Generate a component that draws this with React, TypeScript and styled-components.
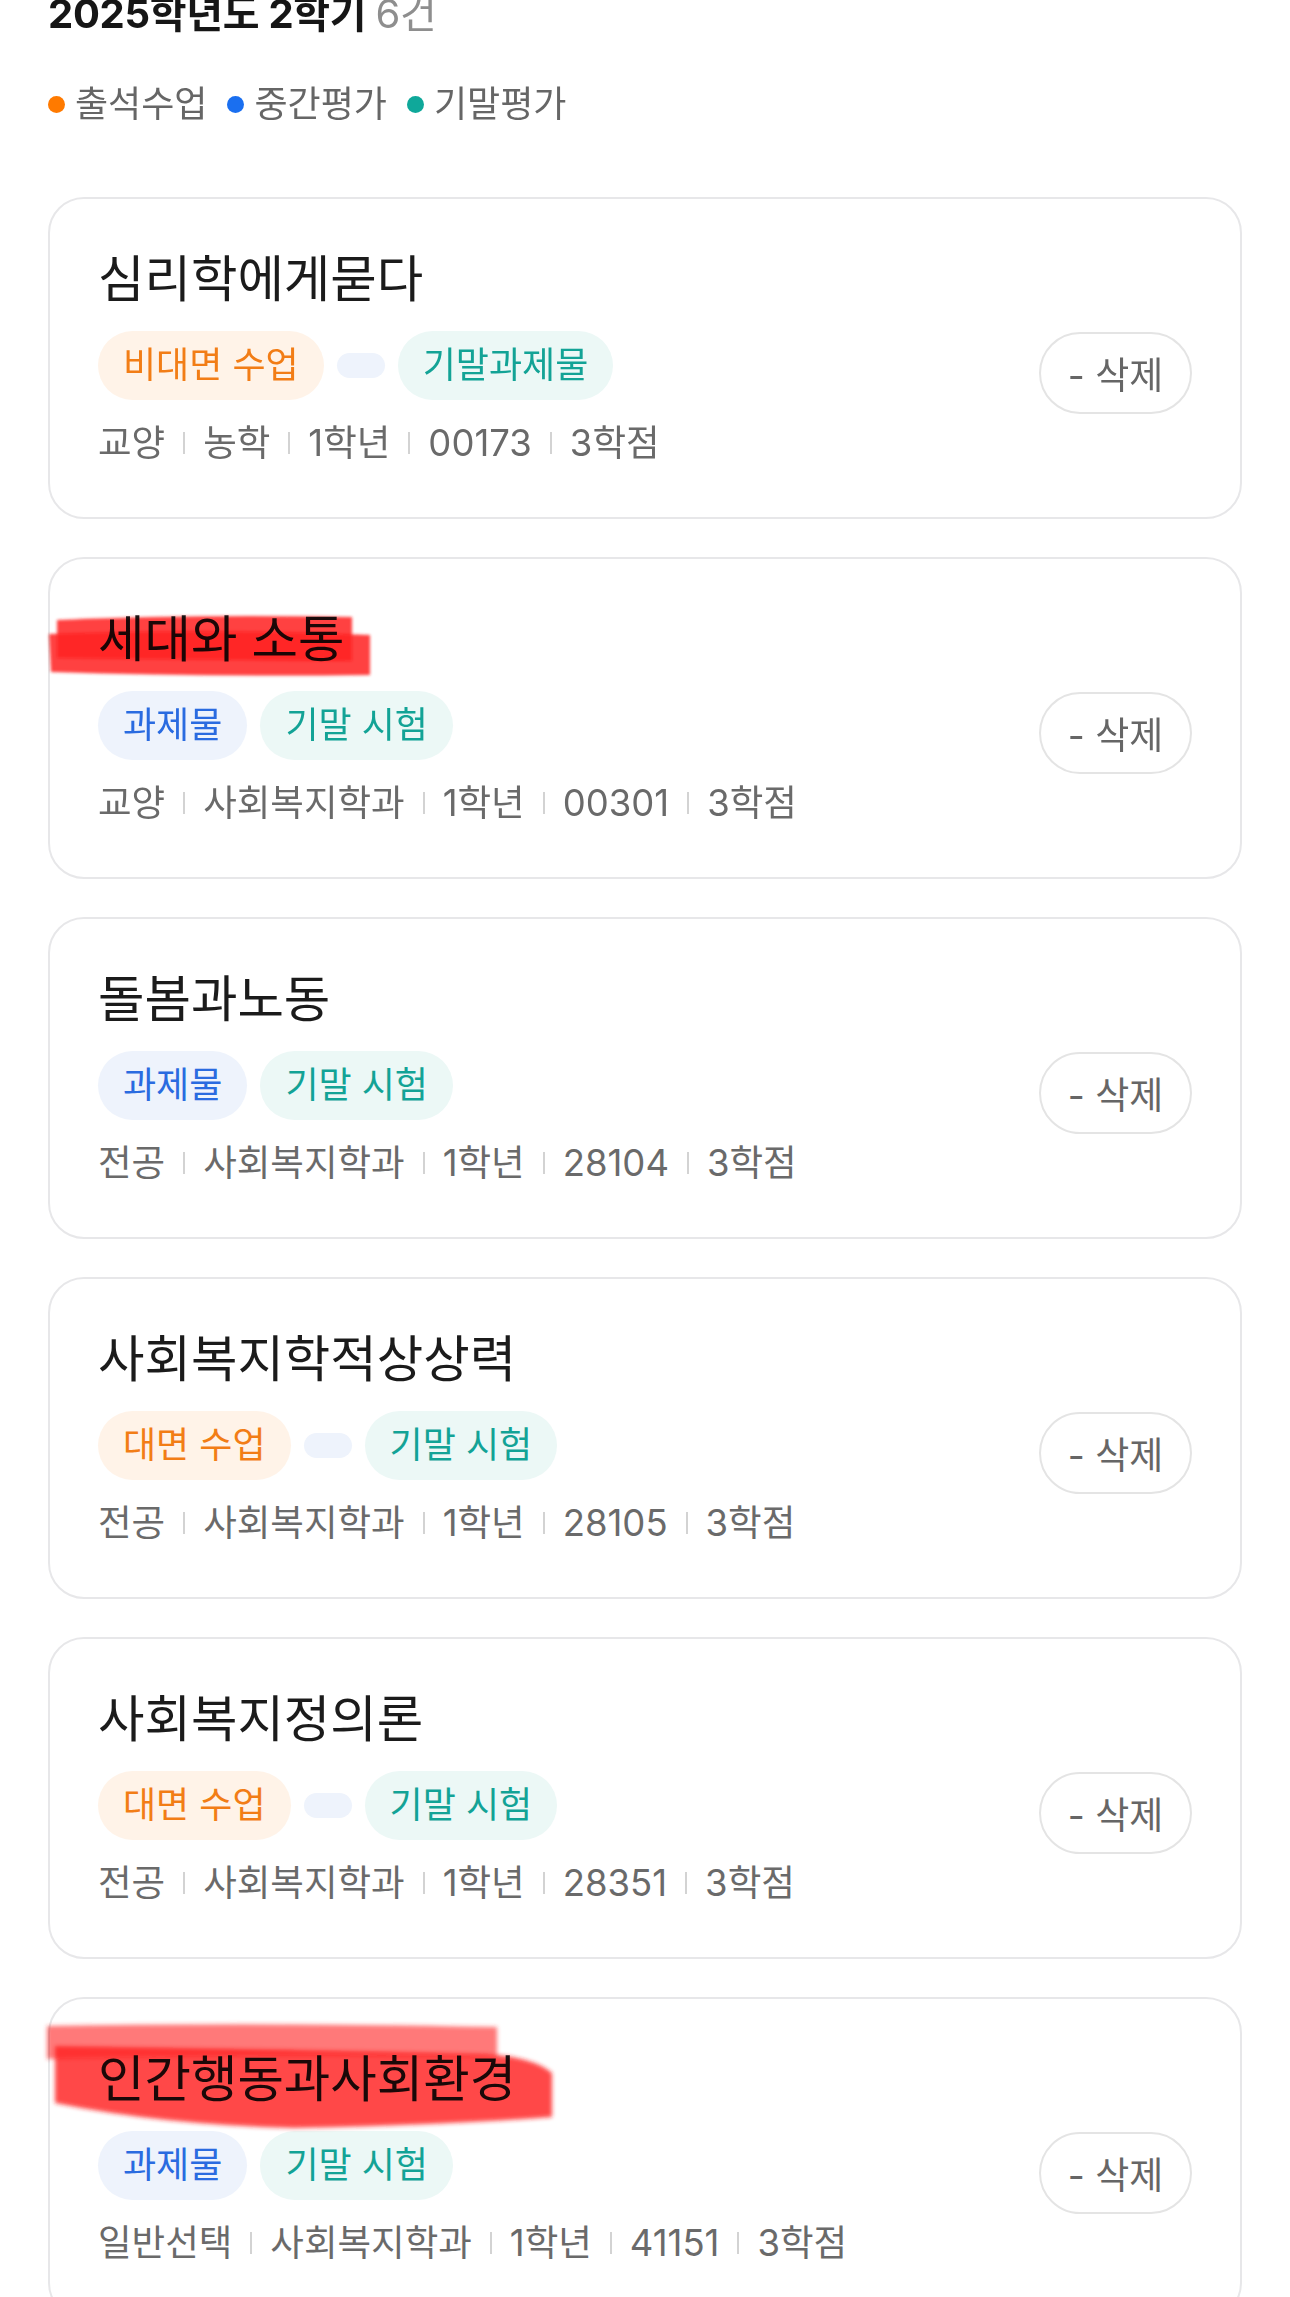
import React from "react";
import styled, { createGlobalStyle, css } from "styled-components";

const GlobalStyle = createGlobalStyle`
  html, body {
    margin: 0;
    padding: 0;
    background: #ffffff;
  }
  body {
    font-family: Inter, "Noto Sans CJK KR", "Noto Sans", sans-serif;
    color: #1d1d1d;
    overflow: hidden;
    -webkit-font-smoothing: antialiased;
  }
`;

type Tone = "orange" | "blue" | "teal";

const toneColors: Record<Tone, { fg: string; bg: string; dot: string }> = {
  orange: { fg: "#f27d16", bg: "#fff3e8", dot: "#ff7a00" },
  blue: { fg: "#2a6be0", bg: "#eef3fc", dot: "#1a6ff0" },
  teal: { fg: "#13a396", bg: "#ecf8f6", dot: "#0fa89a" },
};

const Page = styled.div`
  padding: 0 48px;
`;

const Heading = styled.h2`
  margin: -6px 0 0;
  font-size: 40px;
  line-height: 40px;
  font-weight: 700;
  color: #161616;
  letter-spacing: -0.3px;
`;

const Count = styled.span`
  font-weight: 400;
  color: #8e8e8e;
`;

const Legend = styled.div`
  display: flex;
  align-items: center;
  gap: 20px;
  margin-top: 47px;
`;

const LegendItem = styled.div`
  display: flex;
  align-items: center;
  gap: 10px;
  font-size: 36px;
  line-height: 46px;
  color: #666666;
`;

const Dot = styled.span<{ $tone: Tone }>`
  width: 17px;
  height: 17px;
  border-radius: 50%;
  background: ${(p) => toneColors[p.$tone].dot};
  flex-shrink: 0;
`;

const CardList = styled.div`
  display: flex;
  flex-direction: column;
  gap: 38px;
  margin-top: 70px;
`;

const Card = styled.section`
  position: relative;
  display: flex;
  align-items: center;
  border: 2px solid #e7e7e9;
  border-radius: 36px;
  padding: 50px 48px 51px 48px;
  background: #ffffff;
`;

const CardBody = styled.div`
  flex: 1;
  display: flex;
  flex-direction: column;
  min-width: 0;
`;

const Title = styled.h3`
  margin: 0;
  font-size: 50.5px;
  line-height: 60px;
  font-weight: 400;
  color: #1b1b1b;
`;

const ChipRow = styled.div`
  display: flex;
  align-items: center;
  gap: 13px;
  margin-top: 22px;
`;

const Chip = styled.span<{ $tone: Tone; $empty?: boolean }>`
  display: inline-block;
  padding: 12px 25px;
  border-radius: 999px;
  font-size: 36px;
  line-height: 45px;
  color: ${(p) => toneColors[p.$tone].fg};
  background: ${(p) => toneColors[p.$tone].bg};
  ${(p) =>
    p.$empty &&
    css`
      line-height: 0;
      height: 25px;
      padding: 0;
      width: 48px;
      box-sizing: border-box;
    `}
`;

const Meta = styled.div`
  display: flex;
  align-items: center;
  margin-top: 20px;
  font-size: 36.5px;
  line-height: 46px;
  color: #6a6a6a;
`;

const Sep = styled.span`
  width: 2px;
  height: 22px;
  background: #d3d3d3;
  margin: 0 18px;
  flex-shrink: 0;
`;

const DeleteButton = styled.button`
  flex-shrink: 0;
  width: 153px;
  height: 82px;
  margin-top: 31px;
  border: 2px solid #e4e4e4;
  border-radius: 41px;
  background: #ffffff;
  font-family: Inter, "Noto Sans CJK KR", sans-serif;
  font-size: 37px;
  color: #666666;
  padding: 0;
  display: flex;
  align-items: center;
  justify-content: center;
`;

const Highlight = styled.svg`
  position: absolute;
  overflow: visible;
  pointer-events: none;
  mix-blend-mode: multiply;
`;

type ChipData = { label: string; tone: Tone };

type Course = {
  title: string;
  chips: ChipData[];
  meta: string[];
  mark?: "short" | "long";
};

const courses: Course[] = [
  {
    title: "심리학에게묻다",
    chips: [
      { label: "비대면 수업", tone: "orange" },
      { label: "", tone: "blue" },
      { label: "기말과제물", tone: "teal" },
    ],
    meta: ["교양", "농학", "1학년", "00173", "3학점"],
  },
  {
    title: "세대와 소통",
    chips: [
      { label: "과제물", tone: "blue" },
      { label: "기말 시험", tone: "teal" },
    ],
    meta: ["교양", "사회복지학과", "1학년", "00301", "3학점"],
    mark: "short",
  },
  {
    title: "돌봄과노동",
    chips: [
      { label: "과제물", tone: "blue" },
      { label: "기말 시험", tone: "teal" },
    ],
    meta: ["전공", "사회복지학과", "1학년", "28104", "3학점"],
  },
  {
    title: "사회복지학적상상력",
    chips: [
      { label: "대면 수업", tone: "orange" },
      { label: "", tone: "blue" },
      { label: "기말 시험", tone: "teal" },
    ],
    meta: ["전공", "사회복지학과", "1학년", "28105", "3학점"],
  },
  {
    title: "사회복지정의론",
    chips: [
      { label: "대면 수업", tone: "orange" },
      { label: "", tone: "blue" },
      { label: "기말 시험", tone: "teal" },
    ],
    meta: ["전공", "사회복지학과", "1학년", "28351", "3학점"],
  },
  {
    title: "인간행동과사회환경",
    chips: [
      { label: "과제물", tone: "blue" },
      { label: "기말 시험", tone: "teal" },
    ],
    meta: ["일반선택", "사회복지학과", "1학년", "41151", "3학점"],
    mark: "long",
  },
];

function ShortMark() {
  return (
    <Highlight
      style={{ left: -4, top: 54, width: 326, height: 66 }}
      viewBox="0 0 326 66"
    >
      <defs>
        <filter id="blurA" x="-10%" y="-30%" width="120%" height="160%">
          <feGaussianBlur stdDeviation="1.6" />
        </filter>
      </defs>
      <g filter="url(#blurA)">
        <path
          d="M11,7 Q150,1 306,4 L306,48 Q150,47 11,45 Z"
          fill="#ff2020"
          opacity="0.85"
        />
        <path
          d="M3,21 Q160,15 324,22 L324,62 Q160,64 5,59 Z"
          fill="#ff2020"
          opacity="0.85"
        />
      </g>
    </Highlight>
  );
}

function LongMark() {
  return (
    <Highlight
      style={{ left: -6, top: 22, width: 512, height: 112 }}
      viewBox="0 0 512 112"
    >
      <defs>
        <filter id="blurB" x="-10%" y="-30%" width="120%" height="160%">
          <feGaussianBlur stdDeviation="2" />
        </filter>
      </defs>
      <g filter="url(#blurB)">
        <path
          d="M3,5 Q200,1 453,6 L453,36 Q220,32 3,38 Z"
          fill="#ff3030"
          opacity="0.65"
        />
        <path
          d="M11,25 Q220,28 440,33 Q490,36 508,52 L508,96 Q400,104 250,107 Q120,104 11,82 Z"
          fill="#ff2020"
          opacity="0.82"
        />
      </g>
    </Highlight>
  );
}

function CourseCard({ course }: { course: Course }) {
  return (
    <Card>
      <CardBody>
        <Title>{course.title}</Title>
        <ChipRow>
          {course.chips.map((c, i) =>
            c.label ? (
              <Chip key={i} $tone={c.tone}>
                {c.label}
              </Chip>
            ) : (
              <Chip key={i} $tone={c.tone} $empty />
            )
          )}
        </ChipRow>
        <Meta>
          {course.meta.map((m, i) => (
            <React.Fragment key={i}>
              {i > 0 && <Sep />}
              <span>{m}</span>
            </React.Fragment>
          ))}
        </Meta>
      </CardBody>
      <DeleteButton type="button">- 삭제</DeleteButton>
      {course.mark === "short" && <ShortMark />}
      {course.mark === "long" && <LongMark />}
    </Card>
  );
}

export default function App() {
  return (
    <>
      <GlobalStyle />
      <Page>
        <Heading>
          2025학년도 2학기 <Count>6건</Count>
        </Heading>
        <Legend>
          <LegendItem>
            <Dot $tone="orange" />
            출석수업
          </LegendItem>
          <LegendItem>
            <Dot $tone="blue" />
            중간평가
          </LegendItem>
          <LegendItem>
            <Dot $tone="teal" />
            기말평가
          </LegendItem>
        </Legend>
        <CardList>
          {courses.map((c) => (
            <CourseCard key={c.title} course={c} />
          ))}
        </CardList>
      </Page>
    </>
  );
}
